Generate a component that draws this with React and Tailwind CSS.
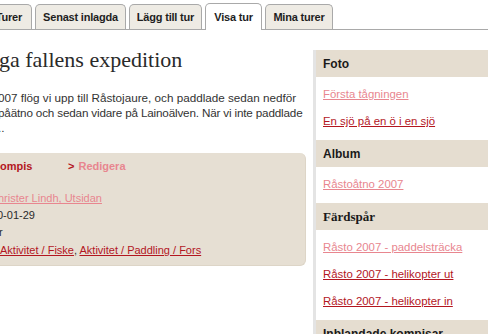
const tabs = [
  { name: "Turer", w: "w-[46px] justify-end pr-[9px]" },
  { name: "Senast inlagda", w: "w-[91px] justify-center" },
  { name: "Lägg till tur", w: "w-[73px] justify-center" },
  { name: "Visa tur", w: "w-[57px] justify-center", active: true },
  { name: "Mina turer", w: "w-[68px] justify-center" },
];

const sections = [
  {
    title: "Foto",
    links: [
      { text: "Första tågningen", visited: true },
      { text: "En sjö på en ö i en sjö" },
    ],
  },
  {
    title: "Album",
    links: [{ text: "Råstoåtno 2007", visited: true }],
  },
  {
    title: "Färdspår",
    serif: true,
    links: [
      { text: "Råsto 2007 - paddelsträcka", visited: true },
      { text: "Råsto 2007 - helikopter ut" },
      { text: "Råsto 2007 - helikopter in" },
    ],
  },
];

export default function App() {
  return (
    <div className="w-[488px] h-[334px] overflow-hidden bg-white font-['Liberation_Sans',Arial,sans-serif] text-[#333]">
      {/* Tabs */}
      <div className="flex items-end gap-[3px] h-[30px] -ml-[14px] border-b border-[#a9a9a9]">
        {tabs.map((t) => (
          <div
            key={t.name}
            className={`${t.w} flex items-center rounded-t-[5px] border border-b-0 border-[#a9a9a9] text-[11px] font-bold text-[#1e1e1e] tracking-[-0.2px] ${
              t.active ? "h-[27px] bg-white -mb-px" : "h-[25px] bg-[#eeebe4]"
            }`}
          >
            {t.name}
          </div>
        ))}
      </div>

      <div className="flex">
        {/* Main column */}
        <div className="w-[306px] shrink-0">
          <h1 className="mt-[17px] -ml-[1px] font-['Liberation_Serif',Georgia,serif] text-[22px] leading-[26px] text-[#2a2a2a]">
            ga fallens expedition
          </h1>
          <p className="mt-[17px] -ml-[2px] whitespace-nowrap text-[11.7px] leading-[15px] text-[#333]">
            007 flög vi upp till Råstojaure, och paddlade sedan nedför
            <br />
            <span className="tracking-[-0.17px]">
              påätno och sedan vidare på Lainoälven. När vi inte paddlade
            </span>
            <br />
            ..
          </p>

          <div className="mt-[18px] -ml-[8px] pl-[8px] h-[113px] rounded-[6px] bg-[#e6dfd3] border-b border-r border-[#ddd5c7] pt-[5px] text-[11px] leading-[17px]">
            <div className="flex font-bold">
              <span className="w-[68px] text-[#b3161f]">ompis</span>
              <span className="text-[#b3161f]">&gt;</span>
              <span className="ml-[4px] text-[#e8868f]">Redigera</span>
            </div>
            <div className="mt-[15px] -ml-[2px]">
              <span className="text-[#e8868f] underline">hrister Lindh, Utsidan</span>
            </div>
            <div className="-ml-[3px] text-[#2a2a2a]">0-01-29</div>
            <div className="-ml-[1px] text-[#2a2a2a]">r</div>
            <div className="mt-[1px] text-[#b3161f]">
              <span className="underline">Aktivitet / Fiske</span>
              <span className="text-[#333]">, </span>
              <span className="underline">Aktivitet / Paddling / Fors</span>
            </div>
          </div>
        </div>

        {/* Sidebar */}
        <div className="ml-[7px] mt-[20px] flex-1 border-l-[3px] border-[#e4e4e4]">
          {sections.map((s) => (
            <div key={s.title}>
              <div
                className={`h-[27px] flex items-center pl-[7px] bg-[#e5ddd0] font-bold text-[#1a1a1a] ${
                  s.serif
                    ? "font-['Liberation_Serif',serif] text-[13px]"
                    : "text-[12px]"
                }`}
              >
                {s.title}
              </div>
              <div className="pt-[4px] pb-[5px]">
                {s.links.map((l) => (
                  <div key={l.text} className="h-[27px] flex items-center pl-[7px] text-[11.4px]">
                    <span className={`underline ${l.visited ? "text-[#e8868f]" : "text-[#b3161f]"}`}>
                      {l.text}
                    </span>
                  </div>
                ))}
              </div>
            </div>
          ))}
          <div className="h-[27px] flex items-center pl-[7px] bg-[#e5ddd0] font-bold text-[12px] text-[#1a1a1a]">
            Inblandade kompisar
          </div>
        </div>
      </div>
    </div>
  );
}
